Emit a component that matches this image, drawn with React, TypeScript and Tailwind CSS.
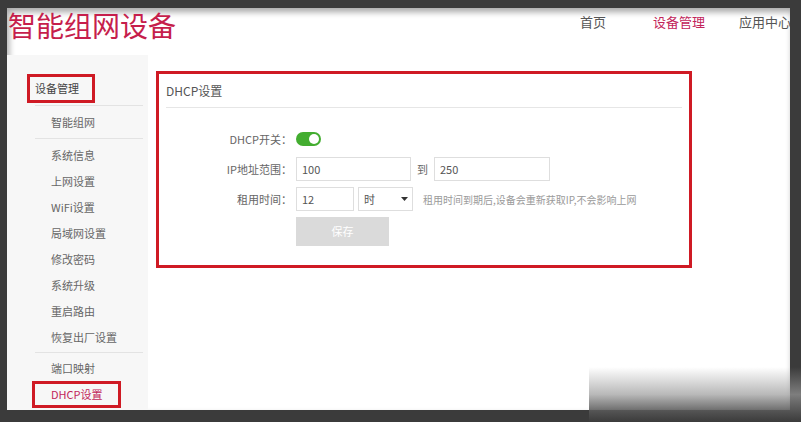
import React from "react";

const cjk = { fontFamily: '"Noto Sans CJK SC", "Microsoft YaHei", sans-serif' };

const NavItem = ({ label, active }: { label: string; active?: boolean }) => (
  <div
    className={`w-[86px] shrink-0 text-center text-[13px] leading-[22px] ${
      active ? "text-[#c2245a]" : "text-[#555]"
    }`}
  >
    {label}
  </div>
);

const SideItem = ({ label }: { label: string }) => (
  <div className="h-[26px] pl-[44px] flex items-center text-[11px] text-[#666]">
    {label}
  </div>
);

const Toggle = () => (
  <div className="w-[25px] h-[14px] rounded-full bg-[#43ad30] relative">
    <div className="absolute right-[2px] top-[2px] w-[10px] h-[10px] rounded-full bg-white" />
  </div>
);

const Row = ({ label, children }: { label: string; children: React.ReactNode }) => (
  <div className="flex items-center">
    <div className="w-[133px] text-right text-[11px] text-[#666]">{label}</div>
    <div className="ml-[4px] flex items-center">{children}</div>
  </div>
);

export default function App() {
  return (
    <div className="w-[801px] h-[422px] bg-[#3b3b3b] pt-[8px] pl-[7px] pr-[11px] pb-[12px] relative overflow-hidden" style={cjk}>
      <div className="w-full h-full bg-white flex flex-col shadow-[inset_2px_4px_6px_rgba(0,0,0,0.35)]">
        {/* header */}
        <div className="h-[47px] shrink-0 flex items-start">
          <div className="w-[543px] shrink-0 pl-[1px] text-[28px] leading-[34px] text-[#c61e4c]">
            智能组网设备
          </div>
          <div className="w-[240px] overflow-x-hidden flex mt-[3px]">
            <NavItem label="首页" />
            <NavItem label="设备管理" active />
            <NavItem label="应用中心" />
          </div>
        </div>

        <div className="flex flex-1">
          {/* sidebar */}
          <div className="w-[141px] shrink-0 bg-[#f7f7f7] pt-[19px]">
            <div className="ml-[20px] w-[68px] h-[29px] border-[3px] border-[#cf1a24] pl-[5px] flex items-center text-[11px] text-[#444]">
              设备管理
            </div>
            <div className="ml-[28px] mt-[2px] w-[108px] h-px bg-[#e3e3e3]" />
            <div className="h-[32px] pl-[44px] flex items-center text-[11px] text-[#666]">智能组网</div>
            <div className="ml-[28px] w-[108px] h-px bg-[#e3e3e3]" />
            <div className="pt-[3px]">
              <SideItem label="系统信息" />
              <SideItem label="上网设置" />
              <SideItem label="WiFi设置" />
              <SideItem label="局域网设置" />
              <SideItem label="修改密码" />
              <SideItem label="系统升级" />
              <SideItem label="重启路由" />
              <SideItem label="恢复出厂设置" />
            </div>
            <div className="ml-[28px] mt-[2px] w-[108px] h-px bg-[#e3e3e3]" />
            <div className="pt-[2px]">
              <SideItem label="端口映射" />
              <div className="ml-[25px] w-[89px] h-[27px] border-[3px] border-[#cf1a24] pl-[16px] flex items-center text-[11px] text-[#c2245a]">
                DHCP设置
              </div>
            </div>
          </div>

          {/* main */}
          <div className="flex-1 pt-[16px] pl-[8px]">
            <div className="w-[536px] h-[197px] border-[3px] border-[#cf1a24]">
              <div className="mx-[7px] h-[34px] border-b border-[#e6e6e6] flex items-center text-[12px] text-[#555]">
                DHCP设置
              </div>
              <div className="pt-[19px] flex flex-col gap-[6px]">
                <Row label="DHCP开关：">
                  <div className="h-[24px] flex items-center">
                    <Toggle />
                  </div>
                </Row>
                <Row label="IP地址范围：">
                  <div className="w-[115px] h-[24px] border border-[#dedede] pl-[5px] flex items-center text-[11px] text-[#555]">100</div>
                  <div className="mx-[6px] text-[11px] text-[#666]">到</div>
                  <div className="w-[116px] h-[24px] border border-[#dedede] pl-[5px] flex items-center text-[11px] text-[#555]">250</div>
                </Row>
                <Row label="租用时间：">
                  <div className="w-[58px] h-[24px] border border-[#dedede] pl-[5px] flex items-center text-[11px] text-[#555]">12</div>
                  <div className="ml-[4px] w-[55px] h-[24px] border border-[#dedede] pl-[5px] pr-[4px] flex items-center justify-between text-[11px] text-[#555]">
                    <span>时</span>
                    <svg width="7" height="4" viewBox="0 0 7 4"><path d="M0 0h7L3.5 4z" fill="#333" /></svg>
                  </div>
                  <div className="ml-[10px] text-[10px] text-[#9a9a9a]">租用时间到期后,设备会重新获取IP,不会影响上网</div>
                </Row>
                <Row label="">
                  <div className="w-[93px] h-[29px] bg-[#dadada] flex items-center justify-center text-[11px] text-white">保存</div>
                </Row>
              </div>
            </div>
          </div>
        </div>
      </div>
      {/* screenshot shadow artifact, bottom right */}
      <div className="absolute left-[589px] top-[367px] w-[212px] h-[55px] bg-linear-to-b from-white/0 via-[#9a9a9a]/70 to-[#3b3b3b]" />
    </div>
  );
}
